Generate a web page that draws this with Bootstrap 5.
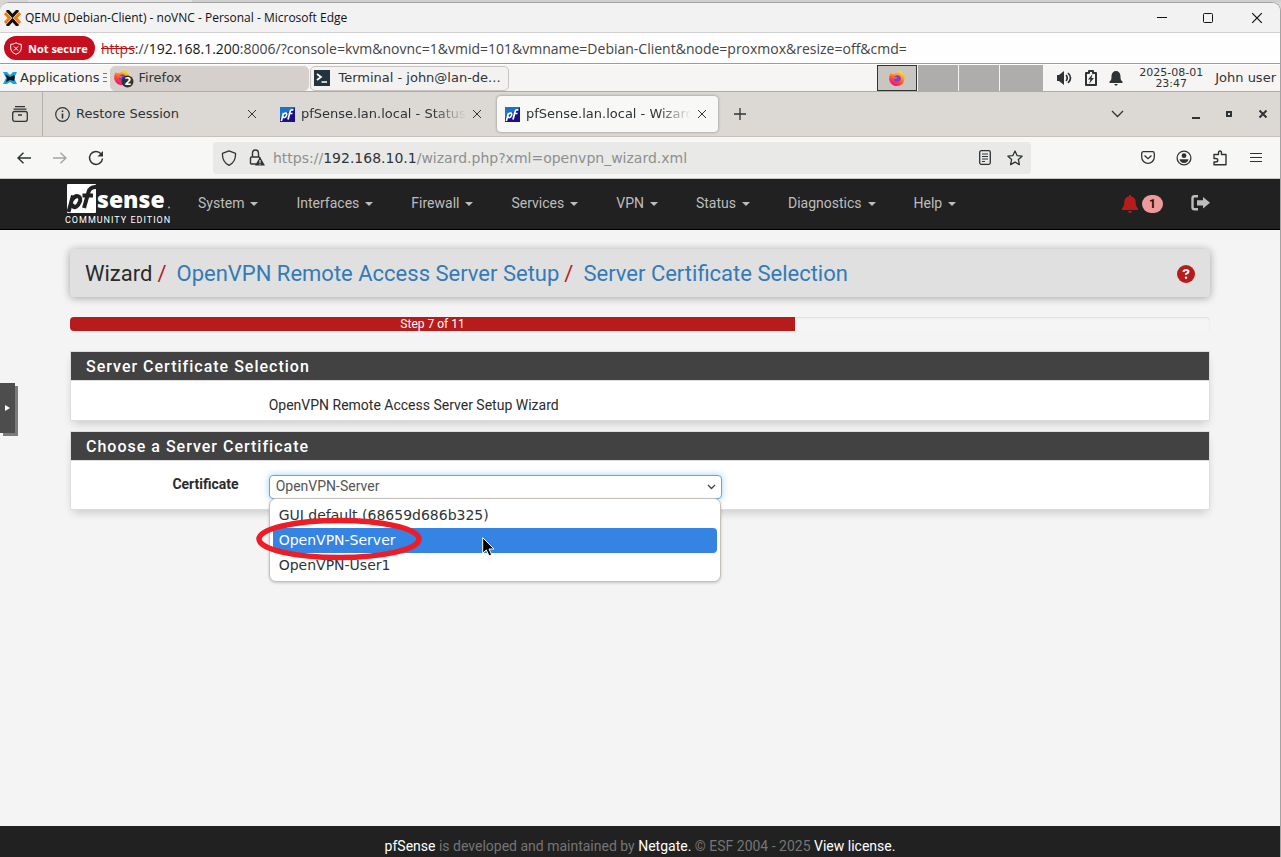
<!DOCTYPE html>
<html lang="en">
<head>
<meta charset="utf-8">
<meta name="viewport" content="width=device-width, initial-scale=1">
<title>QEMU (Debian-Client) - noVNC</title>
<link href="https://cdn.jsdelivr.net/npm/bootstrap@5.3.0/dist/css/bootstrap.min.css" rel="stylesheet">
<style>
:root { --ink: #2e3436; --edge: #a3a3a3; --red: #b71c1c; --line: #dddddd; }
body { background: #d6d6d6; font-family: Roboto, sans-serif; font-size: 14px; line-height: 20px; color: #2b2b2b; overflow-x: hidden; }
svg { display: block; flex: none; }
button { padding: 0; border: 0; background: none; color: inherit; }
.behind { height: 2px; background: linear-gradient(90deg, #d6d6d6 28px, #e2e2e2 28px 192px, #cfcfcf 192px); }
.host { border: 1px solid var(--edge); border-width: 1px 1px 0 0; border-radius: 9px 9px 0 0; overflow: hidden; background: #f4f4f4; }
.titlebar { height: 30px; background: #f2f2f2; border-bottom: 1px solid #cfcfcf; font: 12px "Open Sans", sans-serif; color: #111; padding: 0 17px 0 4px; }
.addressbar { height: 31px; background: #fefefe; border-bottom: 1px solid #9d9d9d; font: 14px "Open Sans", sans-serif; color: #444; padding-left: 4px; }
.addressbar del { color: #b3151b; }
.addressbar b { font-weight: 400; color: #161616; }
.insecure { height: 24px; width: 91px; margin-right: 6px; background: #c50f1f; font: 700 11px "Open Sans", sans-serif; padding-left: 6px; gap: 6px; }
.desk { font-family: "DejaVu Sans", sans-serif; font-size: 13px; color: var(--ink); }
.taskbar { height: 28px; background: #f6f5f4; border-bottom: 1px solid #b0aba6; border-top: 1px solid #fff; }
.apps { margin-left: 3px; gap: 3px; }
.grip { margin: 0 2px 0 4px; }
.task { width: 199px; height: 25px; border: 1px solid #c9c4bf; border-radius: 5px; padding-left: 3px; background: #f4f2f1; }
.task + .task { margin-left: 1px; }
.task.on { background: #d5d0cc; border-color: #d5d0cc; }
.desks { height: 26px; gap: 1px; margin-right: 14px; }
.desks button { width: 40px; background: #aeadac; }
.desks button:last-child { width: 43px; }
.desks .on { background: #c9c6c2; border: 1px solid var(--ink); }
.clock { font-size: 11px; line-height: 11px; width: 64px; text-align: center; }
.tabstrip { height: 45px; background: #dcd9d5; border-bottom: 1px solid #c6c1bb; }
.recent { width: 43px; height: 44px; border-right: 1px solid #b4afaa; padding-left: 12px; }
.tab { width: 221px; height: 36px; border-radius: 4px; padding: 0 11px 0 8px; gap: 6px; }
.tab.on { background: #f8f8f7; box-shadow: 0 0 3px #0006; }
.tab .name { flex: 1; overflow: hidden; white-space: nowrap; -webkit-mask-image: linear-gradient(90deg, #000 80%, transparent); mask-image: linear-gradient(90deg, #000 80%, transparent); }
.tab .name.whole { -webkit-mask-image: none; mask-image: none; }
.tools { height: 42px; background: #f7f7f5; border-bottom: 1px solid #c6c6c2; padding: 0 6px; }
.tools > button { width: 36px; height: 32px; display: grid; place-items: center; }
.urlbox { height: 32px; margin: 0 99px; border-radius: 4px; background: #e9e9e7; padding: 0 8px; font-size: 14px; color: #8d9090; }
.urlbox b { font-weight: 400; color: var(--ink); }
.topnav { background: #212121; border-bottom: 1px solid #000; height: 51px; }
.wrap { width: 1140px; max-width: 100%; margin: 0 auto; }
.brand { width: 108px; margin: 5px 25px 0 -5px; color: #fff; text-decoration: none; }
.brand small { display: block; font-size: 9px; line-height: 12px; letter-spacing: 1px; white-space: nowrap; }
.menu-link { color: #bdbdbd; padding: 14px 0 16px; margin-right: 38px; text-decoration: none; white-space: nowrap; }
.menu-link.dropdown-toggle::after { margin-left: 6px; vertical-align: 2px; border-width: 4px 4px 0; }
.count { width: 21px; height: 18px; border-radius: 9px; background: #ef9a9a; color: #111; font-size: 12px; line-height: 18px; text-align: center; font-weight: 700; }
.crumbs { margin-top: 19px; height: 48px; background: #e0e0e0; border-radius: 4px; box-shadow: 0 1px 8px #0005; padding: 2px 15px 0; font-size: 22px; line-height: 26px; }
.crumbs a { color: #337ab7; text-decoration: none; }
.crumbs .breadcrumb-item + .breadcrumb-item { padding-left: 5px; }
.crumbs .breadcrumb-item + .breadcrumb-item::before { color: var(--red); padding-right: 10px; }
.stepper { margin-top: 20px; height: 14px; border-radius: 4px; background: #f5f5f5; box-shadow: inset 0 1px 2px #0000001a; font-size: 12px; line-height: 14px; }
.stepper .progress-bar { background: var(--red); }
.pane { border: 1px solid var(--line); background: #fff; box-shadow: 0 5px 9px -3px #0003; margin-top: 20px; }
.pane + .pane { margin-top: 10px; }
.pane h2 { background: #424242; color: #fff; border-bottom: 1px solid var(--line); margin: 0; padding: 5px 15px 3px; height: 29px; font-size: 16px; line-height: 20px; font-weight: 500; letter-spacing: 1px; }
.note { padding: 14px 0 5px; }
.choose { padding: 14px 0 10px; }
.field { padding: 0 13px 0 8px; }
.caption { padding-right: 22px; font-weight: 700; text-align: right; line-height: 18px; }
.picker { height: 24px; width: 100%; appearance: none; border: 1px solid #5ea9e0; border-radius: 4px; padding: 0 6px 2px; color: #555; font-size: 14px; line-height: 20px; box-shadow: 0 0 7px #66afe999; background: #fff url("data:image/svg+xml,%3Csvg xmlns='http://www.w3.org/2000/svg' width='9' height='6'%3E%3Cpath d='M1 1l3.5 3.5L8 1' fill='none' stroke='%23444' stroke-width='1.3'/%3E%3C/svg%3E") no-repeat right 5px center; }
.choices { position: absolute; top: 23px; left: 8px; right: 14px; z-index: 3; background: #fff; border: 1px solid #c6c0ba; border-radius: 7px; padding: 4px 3px 3px; box-shadow: 0 1px 3px #0003; font-size: 14px; }
.choices button { display: block; width: 100%; height: 25px; padding: 0 6px 2px; border-radius: 4px; text-align: left; }
.choices .on { background: #3584e4; color: #fff; }
.ring { position: absolute; left: -16px; top: 18px; }
.pointer { position: absolute; left: 212px; top: 38px; }
.drawer { position: absolute; left: 0; top: 380px; width: 15px; height: 50px; background: #4d4d4d; box-shadow: 3px 3px 0 #7b7b7b; display: grid; place-items: center; z-index: 4; }
.foot { background: #212121; color: #757575; padding: 10px 0 1px; text-align: center; }
.foot a { color: #fff; text-decoration: none; }
</style>
</head>
<body>
<svg width="0" height="0" class="position-absolute" aria-hidden="true">
  <defs>
    <linearGradient id="gf" x1=".8" y1="0" x2=".3" y2="1"><stop offset="0" stop-color="#fff044"/><stop offset=".4" stop-color="#ff980e"/><stop offset=".75" stop-color="#ff3647"/><stop offset="1" stop-color="#e31587"/></linearGradient>
    <linearGradient id="gp" x1="0" y1="0" x2=".7" y2="1"><stop offset=".45" stop-color="#1675d1"/><stop offset=".55" stop-color="#1b1185"/></linearGradient>
    <symbol id="fox" viewBox="0 0 16 16"><path d="M10.500 0c1 1.400 3.700 2.700 4.600 5.200C16.800 11 13 16 8 16 3 16 0 12 .2 8c0-2 .8-4 2-5l.6 1.500C3.500 4 4.600 4 5.200 4.200 6.800 2.500 10 3 10.500 0z" fill="url(#gf)"/><path d="M5 6.500c2-1 3-1.800 5-1 3 1.500 2.500 6-1.500 6.300C6 12 4.300 10 5 8.500l2 .5 1.400-1.300z" fill="#7b3fe4"/></symbol>
    <symbol id="shut" viewBox="0 0 10 10"><path d="M1 1l8 8M9 1L1 9" fill="none" stroke="currentColor"/></symbol>
    <symbol id="pficon" viewBox="0 0 15 15"><path d="M0 0h15v15H0z" fill="url(#gp)"/><path d="M1.300 14L3.500 6M3.300 7.500C5 5 7.500 6 6.500 8.500S3.500 11 3 9.500M8 12.500l2-7.500C10.500 3 11.500 2.500 13.500 3M8.500 6.500h4" fill="none" stroke="#fff" stroke-width="1.700"/></symbol>
  </defs>
</svg>

<div class="min-vh-100 d-flex flex-column">
<div class="behind"></div>
<div class="host position-relative d-flex flex-column flex-grow-1">

  <header class="titlebar d-flex align-items-center">
    <svg width="17" height="16" viewBox="0 0 17 16" fill="none" stroke-width="3"><path d="M3 0l5.500 6L14 0M3 16l5.500-6L14 16" stroke="#111"/><path d="M1 3l4.500 5L1 13M16 3l-4.500 5L16 13" stroke="#f17c0e"/></svg>
    <span class="ms-1">QEMU (Debian-Client) - noVNC - Personal - Microsoft Edge</span>
    <div class="ms-auto d-flex align-items-center">
      <button aria-label="Minimize" class="me-4 pe-2"><svg width="14" height="12"><path d="M2 5.500h10" stroke="#111"/></svg></button>
      <button aria-label="Maximize" class="me-4 pe-2"><svg width="14" height="12" fill="none" stroke="#111"><rect x="2.500" y="1.500" width="9" height="9" rx="1"/></svg></button>
      <button aria-label="Close" class="ps-1"><svg width="12" height="12" color="#111"><use href="#shut"/></svg></button>
    </div>
  </header>

  <div class="addressbar d-flex align-items-center text-nowrap">
    <button class="insecure rounded-pill text-white d-flex align-items-center">
      <svg width="12" height="13" viewBox="0 0 12 13" fill="none" stroke="#fff"><path d="M6 .700C8 2 9.500 2.300 11.300 2.300V6c0 3-2 5-5.300 6.300C2.700 11 .7 9 .7 6V2.300C2.500 2.300 4 2 6 .7zM4 4.500l4 4M8 4.500l-4 4"/></svg>
      <span>Not secure</span></button>
    <span><del>https</del>://<b>192.168.1.200</b>:8006/?console=kvm&amp;novnc=1&amp;vmid=101&amp;vmname=Debian-Client&amp;node=proxmox&amp;resize=off&amp;cmd=</span>
  </div>

  <div class="desk">
    <div class="taskbar d-flex align-items-center">
      <button class="apps d-flex align-items-center">
        <svg width="14" height="14" viewBox="0 0 14 14"><path d="M0 1h4l3 3 3-3h4l-3 6 3 6h-4l-3-2-3 2H0l3-6z" fill="#16a3e0"/><path d="M2 3l3 2 2 1 4-2 1 2-1 4-4-1-4 2 1-4z" fill="#111"/></svg>
        <span>Applications</span></button>
      <svg class="grip" width="5" height="13" stroke="#777"><path d="M0 1.500h4M0 5.500h4M0 9.500h4"/></svg>
      <button class="task on d-flex align-items-center">
        <svg width="20" height="20"><use href="#fox" width="16" height="16" y="1"/><circle cx="13.500" cy="13.500" r="6" fill="#2e3436"/><text x="10.500" y="17" font-size="10" font-weight="700" fill="#fff">2</text></svg>
        <span class="ps-1">Firefox</span></button>
      <button class="task d-flex align-items-center">
        <svg width="16" height="16"><path d="M0 0h16v16H0z" fill="#24343f"/><path d="M3 4l4 3-4 3M7.500 12H13" fill="none" stroke="#fff" stroke-width="1.700"/></svg>
        <span class="ps-2">Terminal - john@lan-de...</span></button>
      <div class="desks d-flex ms-auto">
        <button class="on d-flex align-items-center justify-content-center" aria-label="Workspace 1"><svg width="16" height="16"><use href="#fox"/></svg></button>
        <button aria-label="Workspace 2"></button><button aria-label="Workspace 3"></button><button aria-label="Workspace 4"></button>
      </div>
      <svg width="16" height="14" viewBox="0 0 16 14" fill="#2e3436"><path d="M0 4h2l5-4v14l-5-4H0z"/><path d="M9 4q2.500 3 0 6M11 2q5 5 0 10" fill="none" stroke="#2e3436" stroke-width="1.700"/></svg>
      <svg class="mx-2 px-1 w-auto" width="12" height="16" viewBox="0 0 12 16"><path d="M4 1h4v2h3v12H1V3h3z" fill="none" stroke="#2e3436" stroke-width="2" stroke-linejoin="round"/><path d="M7.500 4L3 9.500h2.500L4 14l5-6H6.500z" fill="#2e3436"/></svg>
      <svg width="14" height="16" viewBox="0 0 14 16" fill="#2e3436"><path d="M7 1c3 0 4.500 2.500 4.500 5.500 0 3 .5 4 2 5V13H.5v-1.500c1.500-1 2-2 2-5C2.500 3.500 4 1 7 1zM5 14h4l-2 2z"/></svg>
      <div class="clock ms-3">2025-08-01<br>23:47</div>
      <span class="ms-2 ps-1 pe-1">John user</span>
    </div>

    <div class="tabstrip d-flex align-items-center">
      <button class="recent" aria-label="Recent"><svg width="16" height="16" viewBox="0 0 16 16" fill="none" stroke="#2e3436" stroke-width="1.300"><path d="M3 .7h10M1.500 3.200h13"/><rect x=".7" y="5.500" width="14.600" height="9.800" rx="2"/><path d="M6 9h4" stroke-width="1.600"/></svg></button>
      <div class="d-flex gap-1 ms-1">
        <div class="tab d-flex align-items-center">
          <svg width="15" height="15" fill="none" stroke="#2e3436" stroke-width="1.200"><circle cx="7.500" cy="7.500" r="6.800"/><path d="M7.500 6.500v5M7.500 3.500V5" stroke-width="1.600"/></svg>
          <span class="name whole">Restore Session</span><button aria-label="Close tab"><svg width="10" height="10"><use href="#shut"/></svg></button></div>
        <div class="tab d-flex align-items-center">
          <svg width="15" height="15"><use href="#pficon"/></svg><span class="name">pfSense.lan.local - Status</span><button aria-label="Close tab"><svg width="10" height="10"><use href="#shut"/></svg></button></div>
        <div class="tab on d-flex align-items-center">
          <svg width="15" height="15"><use href="#pficon"/></svg><span class="name">pfSense.lan.local - Wizard</span><button aria-label="Close tab"><svg width="10" height="10"><use href="#shut"/></svg></button></div>
      </div>
      <button class="ms-3" aria-label="New tab"><svg width="12" height="12"><path d="M6 0v12M0 6h12" stroke="#2e3436" stroke-width="1.300"/></svg></button>
      <div class="ms-auto d-flex align-items-center pe-2 me-1">
        <button class="me-5 pe-3" aria-label="List tabs"><svg width="16" height="8" fill="none" stroke="#2e3436" stroke-width="1.300"><path d="M1 1l5.500 5.500L12 1"/></svg></button>
        <button class="me-4" aria-label="Minimize"><svg width="10" height="9"><path d="M1 8h8" stroke="#2e3436" stroke-width="2"/></svg></button>
        <button class="me-4" aria-label="Restore"><svg width="9" height="8" fill="none"><rect x="2" y="2" width="4" height="4" stroke="#2e3436" stroke-width="2"/></svg></button>
        <button aria-label="Close"><svg width="10" height="10" viewBox="0 0 10 10"><path d="M1.500 1.500l7 7M8.500 1.500l-7 7" stroke="#2e3436" stroke-width="2"/></svg></button>
      </div>
    </div>

    <div class="tools d-flex align-items-center">
      <button aria-label="Back"><svg width="14" height="12" fill="none" stroke="#2e3436" stroke-width="1.500"><path d="M14 6H1M6.500 .7L1 6l5.500 5.300"/></svg></button>
      <button aria-label="Forward"><svg width="14" height="12" fill="none" stroke="#a4a5a4" stroke-width="1.500"><path d="M0 6h13M7.500 .7L13 6l-5.500 5.300"/></svg></button>
      <button aria-label="Reload"><svg width="16" height="16" fill="none" stroke="#2e3436" stroke-width="1.500"><path d="M13 3.700A6.500 6.500 0 1 0 14.500 8.500"/><path d="M15 1v5.500H9.500z" fill="#2e3436" stroke="none"/></svg></button>
      <div class="urlbox d-flex align-items-center flex-grow-1 text-nowrap">
        <svg width="16" height="16" fill="none" stroke="#2e3436" stroke-width="1.300"><path d="M8 .8l6.500 2.500c.3 5-1.500 9.500-6.500 12-5-2.500-6.800-7-6.500-12z" stroke-linejoin="round"/></svg>
        <svg class="ms-2 ps-1 w-auto" width="16" height="17" viewBox="0 0 16 17"><path d="M10 15H2.500Q1.500 15 1.500 14V9q0-1 1-1h7q1.500 0 1.500 2M3.500 8V4.500q0-3.500 3-3.500t3 3.500V8" fill="none" stroke="#2e3436" stroke-width="1.400"/><path d="M11 8l5 8.500H6z" fill="#2e3436"/><path d="M11 11v3M11 14.700v1" stroke="#fff"/></svg>
        <span class="ms-2 ps-0">https://<b>192.168.10.1</b>/wizard.php?xml=openvpn_wizard.xml</span>
        <svg class="ms-auto" width="12" height="15" fill="none" stroke="#2e3436" stroke-width="1.300"><rect x=".7" y=".7" width="10.600" height="13.600" rx="1.500"/><path d="M3 4h6M3 6.500h6M3 9h6M3 11.500h3" stroke-width="1"/></svg>
        <svg class="ms-3" width="16" height="16" fill="none" stroke="#2e3436" stroke-width="1.300"><path d="M8 1l2.100 4.600 5 .6-3.700 3.400 1 5L8 12.100l-4.400 2.500 1-5L.9 6.200l5-.6z" stroke-linejoin="round"/></svg>
      </div>
      <button aria-label="Pocket"><svg width="14" height="13" fill="none" stroke="#2e3436" stroke-width="1.300"><path d="M2.500 .7h9q1.800 0 1.800 1.800V6A6.300 6.300 0 0 1 .7 6V2.500Q.7.7 2.500.7zM3.500 4.500L7 7.700l3.500-3.200"/></svg></button>
      <button aria-label="Account"><svg width="16" height="16" fill="#2e3436"><circle cx="8" cy="8" r="6.900" fill="none" stroke="#2e3436" stroke-width="1.300"/><circle cx="8" cy="5.700" r="2.400"/><path d="M3.500 9.200h9Q11.500 13 8 13T3.500 9.200z"/></svg></button>
      <button aria-label="Extensions"><svg width="14" height="16" fill="none" stroke="#2e3436" stroke-width="1.400"><path d="M1 7V4.500h4.500V3q0-2 1.500-2t1.500 2v1.500H13v10.300H1V12h1.500q2.300 0 2.300-1.800T2.500 8.500H1z" stroke-linejoin="round"/></svg></button>
      <button aria-label="Menu"><svg width="12" height="11" stroke="#2e3436" stroke-width="1.200"><path d="M0 1.500h12M0 5.500h12M0 9.500h12"/></svg></button>
    </div>
  </div>

  <nav class="topnav">
    <div class="wrap d-flex align-items-start">
      <a href="#" class="brand">
        <svg width="108" height="30" viewBox="0 0 108 30"><rect x="2" y="0" width="29" height="29" rx="1" fill="#fff"/>
          <path d="M3.500 28L8 11.500M7 16C11 9.500 17.500 12 14.500 18.500S7 24 7.500 19.500M19 24L23.500 8C24.700 4 27 2.500 31.500 3M17.500 11.500H28" fill="none" stroke="#212121" stroke-width="4"/>
          <text x="32" y="24" font-family="Open Sans, sans-serif" font-weight="800" font-size="23" fill="#fff">sense</text><circle cx="104" cy="23.500" r="1" fill="#aaa"/></svg>
        <small>COMMUNITY EDITION</small>
      </a>
      <a href="#" class="menu-link dropdown-toggle">System</a>
      <a href="#" class="menu-link dropdown-toggle">Interfaces</a>
      <a href="#" class="menu-link dropdown-toggle">Firewall</a>
      <a href="#" class="menu-link dropdown-toggle">Services</a>
      <a href="#" class="menu-link dropdown-toggle">VPN</a>
      <a href="#" class="menu-link dropdown-toggle">Status</a>
      <a href="#" class="menu-link dropdown-toggle">Diagnostics</a>
      <a href="#" class="menu-link dropdown-toggle">Help</a>
      <div class="ms-auto d-flex pt-3">
        <svg width="16" height="18" viewBox="0 0 16 18" fill="#b71c1c"><path d="M7 0h2v1.300c3 .5 4.700 2.700 4.700 5.700 0 3 .6 4.500 2.300 6.300V15H0v-1.700C1.700 11.500 2.300 10 2.300 7c0-3 1.700-5.200 4.700-5.700zM6 16h4q-.3 2-2 2t-2-2z"/></svg>
        <span class="count ms-1">1</span>
        <a href="#" aria-label="Logout" class="ms-4 ps-1"><svg width="19" height="16" viewBox="0 0 19 16"><path d="M7 1.200H3.500q-2 0-2 2v9q0 2 2 2H7" fill="none" stroke="#bdbdbd" stroke-width="2.400"/><path d="M6 5.200h6V2l7 5.800-7 5.800v-3.200H6z" fill="#bdbdbd"/></svg></a>
      </div>
    </div>
  </nav>

  <main class="flex-grow-1">
    <div class="wrap">
      <div class="crumbs d-flex align-items-center">
        <ol class="breadcrumb mb-0">
          <li class="breadcrumb-item">Wizard</li>
          <li class="breadcrumb-item"><a href="#">OpenVPN Remote Access Server Setup</a></li>
          <li class="breadcrumb-item"><a href="#">Server Certificate Selection</a></li>
        </ol>
        <a href="#" class="ms-auto" aria-label="Help"><svg width="18" height="18"><circle cx="9" cy="9" r="9" fill="#b71c1c"/><path d="M6.500 7q0-2 2.500-2t2.500 1.800Q11.500 8 9 9v1" fill="none" stroke="#f5f5f5" stroke-width="2"/><circle cx="9" cy="12.700" r="1.200" fill="#f5f5f5"/></svg></a>
      </div>
      <div class="stepper progress">
        <div class="progress-bar" role="progressbar" aria-valuenow="7" aria-valuemax="11" style="width:63.600%">Step 7 of 11</div>
      </div>

      <section class="pane">
        <h2>Server Certificate Selection</h2>
        <div class="row g-0 note"><div class="col-10 offset-2 field">OpenVPN Remote Access Server Setup Wizard</div></div>
      </section>

      <section class="pane">
        <h2>Choose a Server Certificate</h2>
        <div class="row g-0 choose">
          <label class="col-2 caption" for="cert">Certificate</label>
          <div class="col-5 field position-relative">
            <select id="cert" class="picker d-block"><option>GUI default (68659d686b325)</option><option selected>OpenVPN-Server</option><option>OpenVPN-User1</option></select>
            <div class="choices desk">
              <button>GUI default (68659d686b325)</button>
              <button class="on">OpenVPN-Server</button>
              <button>OpenVPN-User1</button>
              <svg class="ring" width="170" height="44"><ellipse cx="85" cy="22" rx="80" ry="18.500" fill="none" stroke="#ee1c25" stroke-width="5.500"/></svg>
              <svg class="pointer" width="13" height="20"><path d="M.7.700v15.500l3.600-3.300 2.700 6 2.700-1.200-2.700-5.700h5z" fill="#000" stroke="#fff"/></svg>
            </div>
          </div>
        </div>
      </section>
    </div>
  </main>

  <footer class="foot"><a href="#">pfSense</a> is developed and maintained by <a href="#">Netgate.</a> © ESF 2004 - 2025 <a href="#">View license.</a></footer>

  <button class="drawer" aria-label="Control bar"><svg width="5" height="8"><path d="M0 1l5 3-5 3z" fill="#fff"/></svg></button>
</div>
</div>
<script src="https://cdn.jsdelivr.net/npm/bootstrap@5.3.0/dist/js/bootstrap.bundle.min.js"></script>
</body>
</html>
